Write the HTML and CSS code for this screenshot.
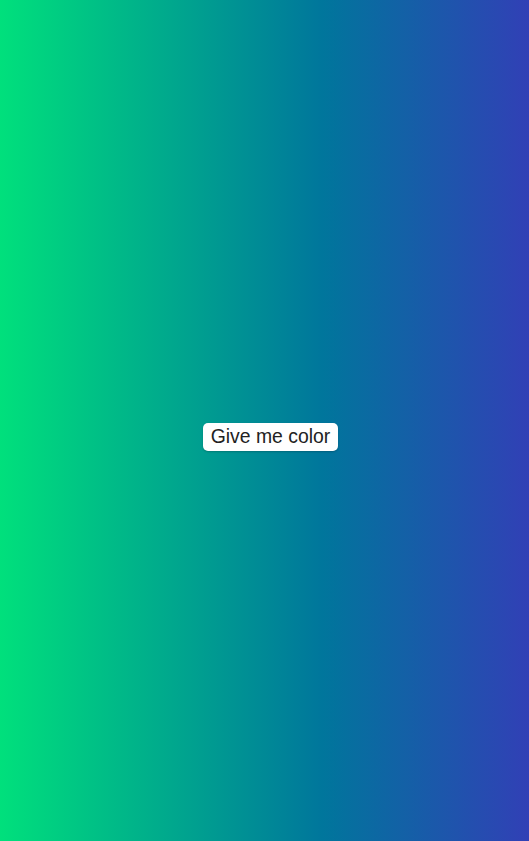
FILE: index.html
```html
<!DOCTYPE html>
<html>
<head>
<meta charset="utf-8">
<link rel="stylesheet" href="styles.css">
</head>
<body>
<main class="stage">
  <button class="color-btn">Give me color</button>
</main>
</body>
</html>
```

FILE: styles.css
```css
html, body {
  margin: 0;
  height: 100%;
}
.stage {
  height: 100%;
  display: flex;
  align-items: center;
  justify-content: center;
  padding: 33px 0 0 12px;
  box-sizing: border-box;
  background: linear-gradient(to right, #00e07c 0%, #00769c 61%, #3140b6 100%);
}
.color-btn {
  font-family: "Liberation Sans", Arial, sans-serif;
  font-size: 19.4px;
  color: #222;
  background: #fff;
  border: none;
  border-radius: 5px;
  padding: 2px 6px 3px;
  height: 28px;
  width: 135px;
  box-shadow: 0 1px 2px rgba(0,0,0,0.2);
}
```
